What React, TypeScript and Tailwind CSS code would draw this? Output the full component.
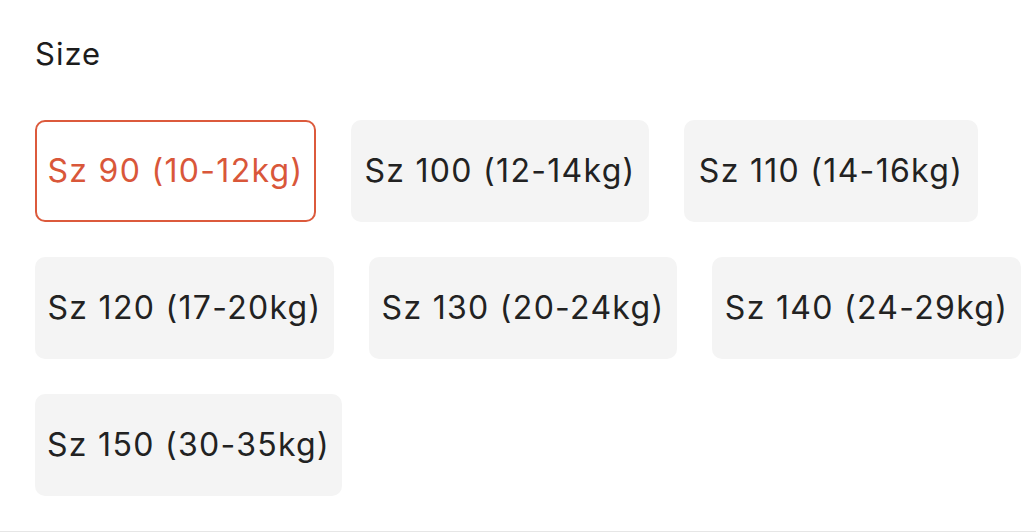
const sizes = [
  { label: "Sz 90 (10-12kg)", w: "w-[281px]", selected: true },
  { label: "Sz 100 (12-14kg)", w: "w-[298px]" },
  { label: "Sz 110 (14-16kg)", w: "w-[294px]" },
  { label: "Sz 120 (17-20kg)", w: "w-[299px]" },
  { label: "Sz 130 (20-24kg)", w: "w-[308px]" },
  { label: "Sz 140 (24-29kg)", w: "w-[309px]" },
  { label: "Sz 150 (30-35kg)", w: "w-[307px]" },
];

export default function App() {
  return (
    <div className="w-[1036px] h-[532px] bg-white border-b border-[#e6e6e6] font-['Inter',sans-serif] overflow-hidden">
      <div className="pl-[35px] pt-[34px]">
        <h2 className="text-[31px] leading-[40px] tracking-[1px] text-[#1c1c1c]">Size</h2>
        <div className="mt-[46px] flex flex-wrap gap-[35px] w-[1000px]">
          {sizes.map((s) =>
            s.selected ? (
              <button
                key={s.label}
                className={`${s.w} h-[102px] rounded-[10px] border-2 border-[#dc5a3c] bg-white text-[#d9573a] text-[32px] tracking-[1.3px] whitespace-nowrap flex items-center justify-center`}
              >
                {s.label}
              </button>
            ) : (
              <button
                key={s.label}
                className={`${s.w} h-[102px] rounded-[10px] bg-[#f4f4f4] text-[#222222] text-[32px] tracking-[1.3px] whitespace-nowrap flex items-center justify-center`}
              >
                {s.label}
              </button>
            )
          )}
        </div>
      </div>
    </div>
  );
}
